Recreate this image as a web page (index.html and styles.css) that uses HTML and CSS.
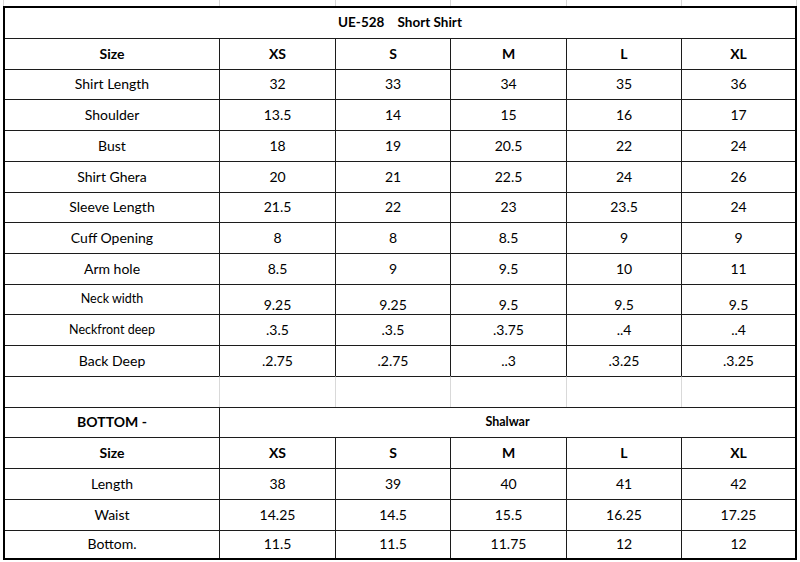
FILE: index.html
```html
<!DOCTYPE html>
<html>
<head>
<meta charset="utf-8">
<title>UE-528 Short Shirt</title>
<link rel="stylesheet" href="styles.css">
</head>
<body>
<div class="sheet">
  <div class="gridlines">
    <span></span><span></span><span></span><span></span><span></span><span class="last"></span>
  </div>
  <div class="chart">
    <div class="c title wide6">UE-528    Short Shirt</div>

    <div class="c first b">Size</div><div class="c b">XS</div><div class="c b">S</div><div class="c b">M</div><div class="c b">L</div><div class="c b">XL</div>

    <div class="c first">Shirt Length</div><div class="c">32</div><div class="c">33</div><div class="c">34</div><div class="c">35</div><div class="c">36</div>
    <div class="c first">Shoulder</div><div class="c">13.5</div><div class="c">14</div><div class="c">15</div><div class="c">16</div><div class="c">17</div>
    <div class="c first">Bust</div><div class="c">18</div><div class="c">19</div><div class="c">20.5</div><div class="c">22</div><div class="c">24</div>
    <div class="c first">Shirt Ghera</div><div class="c">20</div><div class="c">21</div><div class="c">22.5</div><div class="c">24</div><div class="c">26</div>
    <div class="c first">Sleeve Length</div><div class="c">21.5</div><div class="c">22</div><div class="c">23</div><div class="c">23.5</div><div class="c">24</div>
    <div class="c first">Cuff Opening</div><div class="c">8</div><div class="c">8</div><div class="c">8.5</div><div class="c">9</div><div class="c">9</div>
    <div class="c first">Arm hole</div><div class="c">8.5</div><div class="c">9</div><div class="c">9.5</div><div class="c">10</div><div class="c">11</div>
    <div class="c first small">Neck width</div><div class="c low">9.25</div><div class="c low">9.25</div><div class="c low">9.5</div><div class="c low">9.5</div><div class="c low">9.5</div>
    <div class="c first small">Neckfront deep</div><div class="c">.3.5</div><div class="c">.3.5</div><div class="c">.3.75</div><div class="c">..4</div><div class="c">..4</div>
    <div class="c first">Back Deep</div><div class="c">.2.75</div><div class="c">.2.75</div><div class="c">..3</div><div class="c">.3.25</div><div class="c">.3.25</div>

    <div class="c first"></div><div class="c faint"></div><div class="c faint"></div><div class="c faint"></div><div class="c faint"></div><div class="c faint"></div>

    <div class="c first b">BOTTOM -</div><div class="c b wide5 sub">Shalwar</div>

    <div class="c first b">Size</div><div class="c b">XS</div><div class="c b">S</div><div class="c b">M</div><div class="c b">L</div><div class="c b">XL</div>
    <div class="c first">Length</div><div class="c">38</div><div class="c">39</div><div class="c">40</div><div class="c">41</div><div class="c">42</div>
    <div class="c first">Waist</div><div class="c">14.25</div><div class="c">14.5</div><div class="c">15.5</div><div class="c">16.25</div><div class="c">17.25</div>
    <div class="c first">Bottom.</div><div class="c">11.5</div><div class="c">11.5</div><div class="c">11.75</div><div class="c">12</div><div class="c">12</div>
  </div>
</div>
</body>
</html>
```

FILE: styles.css
```css
html, body {
  margin: 0;
  padding: 0;
  background: #ffffff;
}

body {
  font-family: Lato, "Open Sans", "Liberation Sans", sans-serif;
  font-size: 14px;
  color: #000000;
}

.sheet {
  width: 800px;
  height: 562px;
  overflow: hidden;
}

.gridlines {
  display: grid;
  grid-template-columns: 216px 116px 115px 116px 115px 116px;
  height: 6px;
  margin-left: 3px;
  width: 794px;
}

.gridlines span {
  border-left: 1px solid #d6d6d6;
}

.gridlines span.last {
  border-right: 1px solid #d6d6d6;
}

.chart {
  display: grid;
  box-sizing: border-box;
  width: 794px;
  margin-left: 3px;
  border: 2px solid #000000;
  grid-template-columns: 214px 116px 115px 116px 115px 114px;
  grid-template-rows: 30px 31px 30px 31px 31px 31px 30px 31px 31px 30px 31px 31px 31px 30px 31px 31px 31px 28px;
}

.c {
  box-sizing: border-box;
  display: flex;
  align-items: center;
  justify-content: center;
  border-top: 1px solid #1c1c1c;
  border-left: 1px solid #1c1c1c;
  line-height: 17px;
  padding-bottom: 2px;
  white-space: pre;
}

.c.first {
  border-left: none;
}

.c.faint {
  border-left-color: #d9d9d9;
}

.title {
  grid-column: span 6;
  border: none;
  font-weight: 700;
  font-size: 13.5px;
  padding-bottom: 1px;
}

.wide5 {
  grid-column: span 5;
}

.b {
  font-weight: 700;
}

.sub {
  font-size: 12.5px;
}

.small {
  font-size: 12.5px;
}

.low {
  align-items: flex-end;
  padding-bottom: 1px;
}
```
